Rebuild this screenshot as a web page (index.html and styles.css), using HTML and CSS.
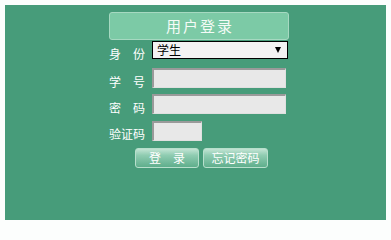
FILE: index.html
```html
<!DOCTYPE html>
<html lang="zh-CN">
<head>
<meta charset="utf-8">
<title>用户登录</title>
<link rel="stylesheet" href="styles.css">
</head>
<body>
<div class="panel">
  <div class="form">
    <div class="title">用户登录</div>
    <div class="row row-id">
      <span class="label">身　份</span>
      <div class="select"><span class="sel-text">学生</span><span class="arrow"></span></div>
    </div>
    <div class="row row-user">
      <span class="label">学　号</span>
      <div class="input wide"></div>
    </div>
    <div class="row row-pass">
      <span class="label">密　码</span>
      <div class="input wide"></div>
    </div>
    <div class="row row-code">
      <span class="label">验证码</span>
      <div class="input short"></div>
    </div>
    <div class="buttons">
      <div class="btn btn-login">登　录</div>
      <div class="btn btn-forget">忘记密码</div>
    </div>
  </div>
</div>
</body>
</html>
```

FILE: styles.css
```css
html, body {
  margin: 0;
  padding: 0;
  background: #fcfefd;
}
body {
  padding: 5px;
  font-family: "Noto Sans CJK SC", "Noto Sans", sans-serif;
}
.panel {
  width: 381px;
  height: 215px;
  background: #479c7a;
  overflow: hidden;
}
.form {
  margin-left: 104px;
  padding-top: 7px;
  width: 184px;
  display: flex;
  flex-direction: column;
}
.title {
  width: 178px;
  height: 26px;
  border: 1px solid #a6d9c1;
  border-radius: 3px;
  background: #7ccaa6;
  color: #f4fbf7;
  font-size: 15px;
  line-height: 26px;
  letter-spacing: 2px;
  text-align: center;
  text-indent: 2px;
}
.row {
  display: flex;
  align-items: flex-end;
}
.label {
  width: 36px;
  margin-right: 7px;
  color: #ffffff;
  font-size: 12px;
  line-height: 12px;
  white-space: nowrap;
}
.row-id { margin-top: 1px; }
.row-id .label { margin-bottom: -1px; }
.row-user { margin-top: 9px; }
.row-pass { margin-top: 6px; }
.row-code { margin-top: 7px; }
.row-code .label { margin-bottom: 1px; }
.select {
  box-sizing: border-box;
  width: 136px;
  height: 18px;
  border: 1px solid #000;
  background: #f3f3f3;
  display: flex;
  align-items: center;
  justify-content: space-between;
  padding: 0 6px 0 4px;
}
.sel-text {
  font-size: 12px;
  line-height: 14px;
  color: #000;
}
.arrow {
  width: 0;
  height: 0;
  border-left: 3px solid transparent;
  border-right: 3px solid transparent;
  border-top: 6px solid #000;
}
.input {
  box-sizing: border-box;
  height: 20px;
  background: #e8e8e8;
  border-top: 2px solid #9a9a9a;
  border-left: 2px solid #9a9a9a;
  border-right: 1px solid #e0e0e0;
  border-bottom: 1px solid #e0e0e0;
}
.wide { width: 134px; }
.short { width: 50px; }
.buttons {
  display: flex;
  gap: 4px;
  margin-top: 7px;
  margin-left: 26px;
}
.btn {
  box-sizing: border-box;
  height: 20px;
  border: 1px solid #b7dfcc;
  border-radius: 3px;
  background: linear-gradient(to bottom, #c2e4d4 0%, #8fccb1 35%, #5fae8c 100%);
  color: #ffffff;
  font-size: 12px;
  line-height: 18px;
  text-align: center;
}
.btn-login { width: 64px; }
.btn-forget { width: 65px; }
```
